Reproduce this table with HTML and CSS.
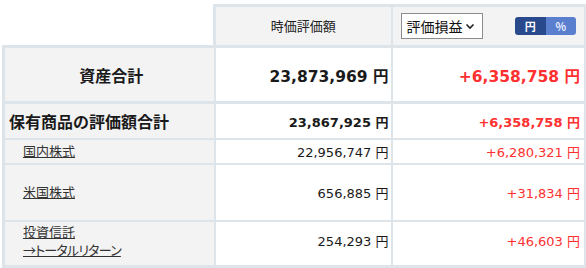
FILE: index.html
```html
<!DOCTYPE html>
<html lang="ja">
<head>
<meta charset="utf-8">
<link rel="stylesheet" href="styles.css">
</head>
<body>
<table class="assets">
  <colgroup>
    <col class="c-label">
    <col class="c-value">
    <col class="c-gain">
  </colgroup>
  <thead>
    <tr class="head">
      <th class="blank"></th>
      <th class="h-value">時価評価額</th>
      <th class="h-gain">
        <div class="gain-tools">
          <div class="select">評価損益<svg class="chev" width="10" height="7" viewBox="0 0 10 7"><path d="M1.5 1.5 L5 5 L8.5 1.5" fill="none" stroke="#222" stroke-width="1.6"/></svg></div>
          <div class="toggle"><span class="on">円</span><span class="off">%</span></div>
        </div>
      </th>
    </tr>
  </thead>
  <tbody>
    <tr class="total">
      <td class="label">資産合計</td>
      <td class="num">23,873,969 円</td>
      <td class="num plus">+6,358,758 円</td>
    </tr>
    <tr class="sum">
      <td class="label">保有商品の評価額合計</td>
      <td class="num">23,867,925 円</td>
      <td class="num plus">+6,358,758 円</td>
    </tr>
    <tr class="item r1">
      <td class="label"><a href="#">国内株式</a></td>
      <td class="num">22,956,747 円</td>
      <td class="num plus">+6,280,321 円</td>
    </tr>
    <tr class="item r2">
      <td class="label"><a href="#">米国株式</a></td>
      <td class="num">656,885 円</td>
      <td class="num plus">+31,834 円</td>
    </tr>
    <tr class="item r3 last">
      <td class="label"><a href="#">投資信託</a><br><a href="#" class="palt">→トータルリターン</a></td>
      <td class="num">254,293 円</td>
      <td class="num plus">+46,603 円</td>
    </tr>
    <tr class="item r4">
      <td class="label"></td>
      <td class="num"></td>
      <td class="num"></td>
    </tr>
  </tbody>
</table>
</body>
</html>
```

FILE: styles.css
```css
html, body {
  margin: 0;
  padding: 0;
  background: #fff;
}
body {
  font-family: "DejaVu Sans", "Noto Sans CJK JP", sans-serif;
  color: #1a1a1a;
  overflow: hidden;
}
.assets {
  border-collapse: collapse;
  table-layout: fixed;
  width: 582px;
  margin: 4px 0 0 2px;
}
.c-label { width: 211px; }
.c-value { width: 177px; }
.c-gain { width: 194px; }

.assets th, .assets td {
  padding: 0;
  border: 2px solid #dde5eb;
}
.head th {
  height: 36px;
  background: #f3f3f3;
  border-top: 3px solid #dde5eb;
  font-weight: normal;
  font-size: 13px;
  font-family: "Noto Sans CJK JP", sans-serif;
  color: #222;
}
.head th.blank {
  background: #fff;
  border: none;
  border-bottom: 3px solid #dde5eb;
}
.head th.h-value { border-left: 3px solid #dde5eb; padding-bottom: 2px; }
.head th.h-gain { border-right: 3px solid #dde5eb; }

.gain-tools {
  display: flex;
  align-items: center;
  justify-content: space-between;
  padding: 0 8px 0 8px;
}
.select {
  display: flex;
  align-items: center;
  justify-content: space-between;
  box-sizing: border-box;
  width: 82px;
  height: 26px;
  padding: 0 7px 0 5px;
  border: 1px solid #8c8c8c;
  background: #fff;
  font-size: 14px;
  color: #111;
}
.chev { margin-top: 1px; }
.toggle {
  display: flex;
  height: 18px;
  width: 61px;
  border-radius: 3px;
  overflow: hidden;
  font-size: 11px;
  font-weight: bold;
  line-height: 18px;
}
.toggle span {
  flex: 1;
  text-align: center;
  color: #fff;
}
.toggle .on { background: #284a8c; }
.toggle .off { background: #5a7fcf; color: #e8eeff; }

.label {
  background: #f3f3f3;
  border-left: 3px solid #dde5eb !important;
}
.assets td.num {
  text-align: right;
  background: #fff;
  font-size: 13px;
  padding-right: 2px;
}
.assets td.num:last-child {
  border-right: 3px solid #dde5eb;
  padding-right: 4px;
}
.plus { color: #ff3030; }

.total td {
  height: 53px;
  border-top: 3px solid #dde5eb;
  border-bottom: 3px solid #dde5eb;
}
.total .label {
  text-align: center;
  font-size: 16px;
  font-weight: bold;
  font-family: "Noto Sans CJK JP", sans-serif;
  padding-left: 4px;
}
.total td.num {
  font-size: 15.5px;
  font-weight: bold;
}

.sum td { height: 34px; }
.sum .label {
  font-size: 16px;
  font-weight: bold;
  font-family: "Noto Sans CJK JP", sans-serif;
  padding-left: 4px;
}
.sum td.num { font-weight: bold; }

.item .label {
  font-size: 13px;
  font-family: "Noto Sans CJK JP", sans-serif;
  padding-left: 18px;
  line-height: 18px;
}
.item .label a {
  color: #333;
  text-decoration: underline;
}
.palt {
  font-feature-settings: "palt" 1;
  letter-spacing: -0.8px;
}
.r1 td { height: 22px; padding-bottom: 1px; }
.r2 td { height: 54px; padding-bottom: 1px; }
.r3 td { height: 37px; padding-bottom: 6px; }
.last td { border-bottom: 3px solid #dde5eb; }
.r4 td { height: 20px; }
```
